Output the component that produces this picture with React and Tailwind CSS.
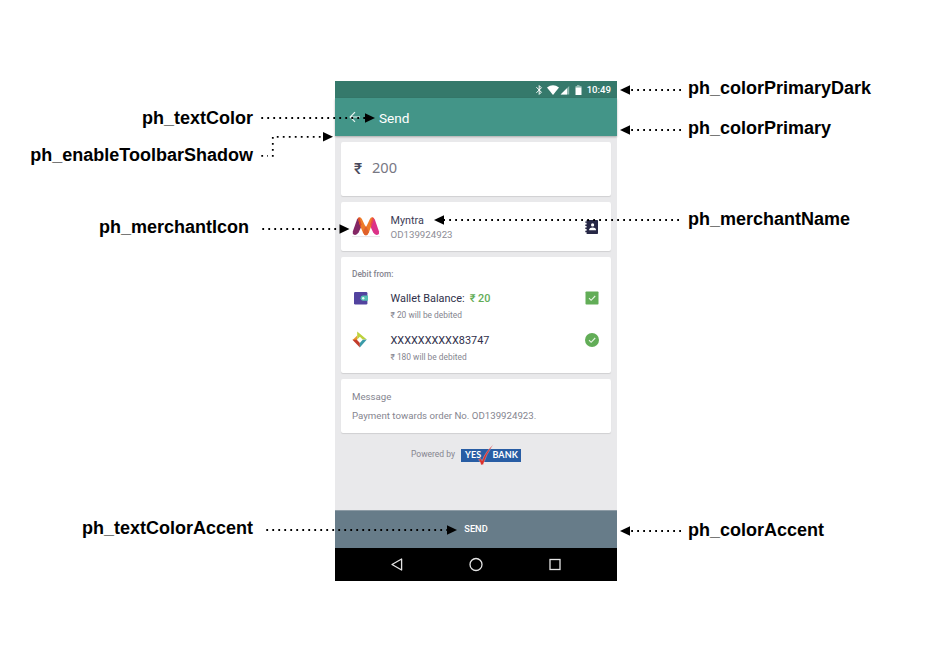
import React from 'react';

const card = 'mx-[6px] rounded-[2px] bg-white shadow-[0_1px_1px_rgba(0,0,0,0.11)]';

function Label({ children, className }) {
  return <div className={`h-[24px] text-[18px] leading-[24px] font-bold whitespace-nowrap ${className}`}>{children}</div>;
}

function StatusBar() {
  return (
    <div className="flex h-[17px] items-center justify-end bg-[#35796b] pr-[6px] text-white">
      <svg width="48" height="12" viewBox="0 0 48 12" className="mr-[4px] shrink-0">
        <path d="M1.4 3.2L6.4 8.2L4.2 10.4V1.6L6.4 3.8L1.4 8.8" fill="none" stroke="#fff" strokeWidth="1" />
        <path d="M12 3.4Q18 -0.8 24 3.4L18 11Z" fill="#fff" />
        <path d="M25.6 10.6H34.2V2Z" fill="#8fb8af" />
        <path d="M25.6 10.6H32V4.2Z" fill="#fff" />
        <path d="M40.5 2H42V1H44.5V2H46.5V4H40.5Z" fill="#8fb8af" />
        <path d="M40.5 3.6H46.5V11H40.5Z" fill="#fff" />
      </svg>
      <span className="text-[9.6px] leading-[17px] font-medium">10:49</span>
    </div>
  );
}

function Toolbar() {
  return (
    <div className="relative flex h-[38px] items-center bg-[#439588] pl-[14px] text-white shadow-[0_1px_2px_rgba(0,0,0,0.28)]">
      <svg width="12" height="12" viewBox="0 0 12 12" className="mr-[18px]">
        <path d="M11 6H1.4M6 1.2L1.2 6L6 10.8" fill="none" stroke="#e9f4f2" strokeWidth="1.2" />
      </svg>
      <span className="pt-px text-[13.6px] leading-[20px]">Send</span>
    </div>
  );
}

function MyntraLogo() {
  return (
    <svg width="28" height="22" viewBox="0 0 28 22">
      <path d="M.8 15.6L5 3.6Q6.4 .6 8.4 2.4L10.6 8L6.6 16.6Q4.8 19.4 2.2 18.8Q.2 18.2 .8 15.6Z" fill="#842765" />
      <path d="M27 15.6L22.8 3.6Q21.4 .6 19.4 2.4L17.2 8L21.2 16.6Q23 19.4 25.6 18.8Q27.6 18.2 27 15.6Z" fill="#dc3288" />
      <path d="M5.8 2.2Q8.4 -.2 10 3.2L13.9 11.4L17.8 3.2Q19.4 -.2 22 2.2L17 16.2Q15.6 19.2 13.9 19.2Q12.2 19.2 10.8 16.2L8 9.5Z" fill="#ee7b28" />
      <path d="M13.9 9.6L16.9 16.2Q15.6 19.2 13.9 19.2Q12.2 19.2 10.8 16.2Z" fill="#e0602a" />
      <path d="M5.8 2.2Q6.6 1.3 7.4 1.4L9.4 8.2L8.6 11Z" fill="#d94d2a" />
      <path d="M22 2.2Q21.2 1.3 20.4 1.4L18.4 8.2L19.2 11Z" fill="#e84a4c" />
      <path d="M0 20.6H28" stroke="#dedee2" strokeWidth=".8" />
    </svg>
  );
}

function ContactIcon() {
  return (
    <svg width="14" height="14" viewBox="0 0 14 14">
      <path d="M1.6 0H12.2Q13 0 13 .8V13.2Q13 14 12.2 14H1.6V12.3H.3V10.8H1.6V9.1H.3V7.6H1.6V6H.3V4.5H1.6V2.8H.3V1.4H1.6Z" fill="#272846" />
      <circle cx="7.6" cy="4.9" r="1.6" fill="#fff" />
      <path d="M4.2 10.2V9.3Q4.5 7.6 7.6 7.6Q10.7 7.6 11 9.3V10.2Z" fill="#fff" />
    </svg>
  );
}

function WalletIcon() {
  return (
    <svg width="14" height="13" viewBox="0 0 14 13">
      <rect width="13.4" height="12.4" rx="1.2" fill="#52439f" />
      <path d="M8.8 3.6H14V8.8H8.8Q6.6 8.4 6.6 6.2Q6.6 4 8.8 3.6Z" fill="#56bfb2" />
      <circle cx="9.2" cy="6.2" r="1.2" fill="#e8fbf8" />
    </svg>
  );
}

function BankIcon() {
  return (
    <svg width="16" height="17" viewBox="0 0 16 17">
      <path d="M5.2 .4L14.8 8.6H10.6L7.9 5.8L5.2 8.6Z" fill="#bdd23c" />
      <path d="M.6 8.9L5.2 4.6V8.6L4.6 9.2Z" fill="#e7982e" />
      <path d="M.4 8.8H4.8L7.9 12V16.4Z" fill="#c43b2a" />
      <path d="M7.8 12L10.8 8.8L14.8 8.6L7.8 16.4Z" fill="#3b9ba8" />
    </svg>
  );
}

function Check({ round }) {
  return (
    <svg width="14" height="14" viewBox="0 0 14 14">
      {round ? <circle cx="7" cy="7" r="7" fill="#62ad57" /> : <rect x=".5" y=".5" width="13" height="13" rx=".8" fill="#62ad57" />}
      <path d="M4 7.2L6.1 9.3L10.2 5" fill="none" stroke="#eaf6e8" strokeWidth="1.1" />
    </svg>
  );
}

function DebitRow({ icon, title, amount, note, round }) {
  return (
    <div className="flex h-[41.5px]">
      <div className="flex h-[18px] w-[38.5px] shrink-0 items-center">{icon}</div>
      <div className="flex-1">
        <div className="pt-[1px] text-[10.9px] leading-[18px] whitespace-nowrap text-[#30304b]">
          {title}
          {amount && <span className="ml-[5px] font-medium text-[#62ad57]">{amount}</span>}
        </div>
        <div className="text-[8.4px] leading-[15px] whitespace-nowrap text-[#85858f]">{note}</div>
      </div>
      <div className="flex h-[18px] items-center"><Check round={round} /></div>
    </div>
  );
}

function YesBank() {
  return (
    <div className="relative ml-[6px] flex h-[13px] w-[60px] items-center justify-between bg-[#285da4] pr-[3px] pl-[4px] text-[9px] font-bold text-white" style={{ fontFamily: 'Lato, sans-serif' }}>
      <span className="tracking-[0.1px]">YES</span>
      <span className="tracking-[0.1px]">BANK</span>
      <svg width="18" height="22" viewBox="0 0 18 22" className="absolute -top-[5px] left-[16px]">
        <path d="M16.2 .8Q9 10.5 6.2 20.4L4.2 21Q3.4 18 1.6 15.6L3.6 14.5L5.1 16.7Q8.6 7.5 16.2 .8Z" fill="#dc302b" stroke="#e7edf5" strokeWidth=".3" />
      </svg>
    </div>
  );
}

function Phone() {
  return (
    <div className="flex h-[500px] w-[282px] shrink-0 flex-col bg-[#e9e9eb]" style={{ fontFamily: 'Roboto, sans-serif' }}>
      <StatusBar />
      <Toolbar />
      <div className={`${card} mt-[5.5px] flex h-[54.5px] items-center pl-[13px]`}>
        <span className="w-[18px] pt-px text-[15.5px] font-medium text-[#4a4a5c]">₹</span>
        <span className="pb-px text-[14.6px] text-[#777783]" style={{ fontFamily: '"Noto Sans", sans-serif' }}>200</span>
      </div>
      <div className={`${card} mt-[6px] flex h-[49px] items-center pr-[12px] pl-[11px]`}>
        <MyntraLogo />
        <div className="ml-[10.5px] flex-1 pt-[2px]">
          <div className="text-[10.8px] leading-[14px] text-[#3c3c56]">Myntra</div>
          <div className="text-[9.7px] leading-[13px] text-[#8d8d96]">OD139924923</div>
        </div>
        <ContactIcon />
      </div>
      <div className={`${card} mt-[6px] h-[116px] pt-[10px] pr-[12.5px] pl-[11px]`}>
        <div className="h-[22px] text-[8.3px] leading-[14px] font-medium text-[#85858f]">Debit from:</div>
        <DebitRow icon={<span className="ml-[2px]"><WalletIcon /></span>} title="Wallet Balance:" amount="₹ 20" note="₹ 20 will be debited" />
        <DebitRow icon={<BankIcon />} title="XXXXXXXXXX83747" note="₹ 180 will be debited" round />
      </div>
      <div className={`${card} mt-[5.5px] h-[54.5px] px-[11px] pt-[8px] text-[9.68px] text-[#85858f]`}>
        <div className="leading-[19px]">Message</div>
        <div className="leading-[19px] whitespace-nowrap">Payment towards order No. OD139924923.</div>
      </div>
      <div className="mt-[13px] flex h-[16px] items-center pl-[76px]">
        <span className="w-[44px] text-[8.5px] whitespace-nowrap text-[#85858f]">Powered by</span>
        <div className="pt-[2px]"><YesBank /></div>
      </div>
      <div className="mt-auto flex h-[38px] items-center justify-center border-t border-[#8d9ba5] bg-[#677c89] pb-px text-[9.2px] font-medium text-white">SEND</div>
      <div className="flex h-[33px] items-center bg-black pl-[54px]">
        <svg width="174" height="16" viewBox="0 0 174 16" fill="none" stroke="#e4e4e4" strokeWidth="1.3">
          <path d="M3 7.5L12.6 2V13Z" strokeLinejoin="round" />
          <circle cx="87" cy="7.5" r="6" />
          <rect x="161" y="2.5" width="10" height="10" />
        </svg>
      </div>
    </div>
  );
}

// Each callout runs from its label to the arrow tip.
const arrows = [
  { d: 'M261.3 118H366', tip: [375, 118], dir: 1 },
  { d: 'M261.3 155.8H268M272.8 156.8V136.8H325', tip: [333, 136.8], dir: 1 },
  { d: 'M262.3 229H342', tip: [349.5, 229], dir: 1 },
  { d: 'M266.3 530H449', tip: [457, 530], dir: 1 },
  { d: 'M681 90H630', tip: [620, 90], dir: -1 },
  { d: 'M681 130H630', tip: [620, 130], dir: -1 },
  { d: 'M679 220H443', tip: [434, 220], dir: -1 },
  { d: 'M681 531H630', tip: [620, 531], dir: -1 },
];

function Arrows() {
  return (
    <svg width="933" height="653" viewBox="0 0 933 653" className="absolute inset-0">
      {arrows.map(({ d, tip: [x, y], dir }) => (
        <g key={d}>
          <path d={d} fill="none" stroke="#000" strokeWidth="1.8" strokeDasharray="1.8 4.2" />
          <path d={`M${x} ${y}L${x - dir * 10} ${y - 4.7}V${y + 4.7}Z`} />
        </g>
      ))}
    </svg>
  );
}

export default function App() {
  return (
    <div className="relative flex h-[653px] w-[933px] overflow-hidden bg-white pt-[81px] text-black" style={{ fontFamily: '"Liberation Sans", Arial, sans-serif' }}>
      <div className="flex w-[335px] shrink-0 flex-col items-end pr-[82px]">
        <Label className="mt-[25px]">ph_textColor</Label>
        <Label className="mt-[13px]">ph_enableToolbarShadow</Label>
        <Label className="mt-[48px] mr-[4px]">ph_merchantIcon</Label>
        <Label className="mt-[277px]">ph_textColorAccent</Label>
      </div>
      <Phone />
      <div className="flex flex-col pl-[71px]">
        <Label className="-mt-[5px]">ph_colorPrimaryDark</Label>
        <Label className="mt-[16px]">ph_colorPrimary</Label>
        <Label className="mt-[67px]">ph_merchantName</Label>
        <Label className="mt-[287px]">ph_colorAccent</Label>
      </div>
      <Arrows />
    </div>
  );
}
